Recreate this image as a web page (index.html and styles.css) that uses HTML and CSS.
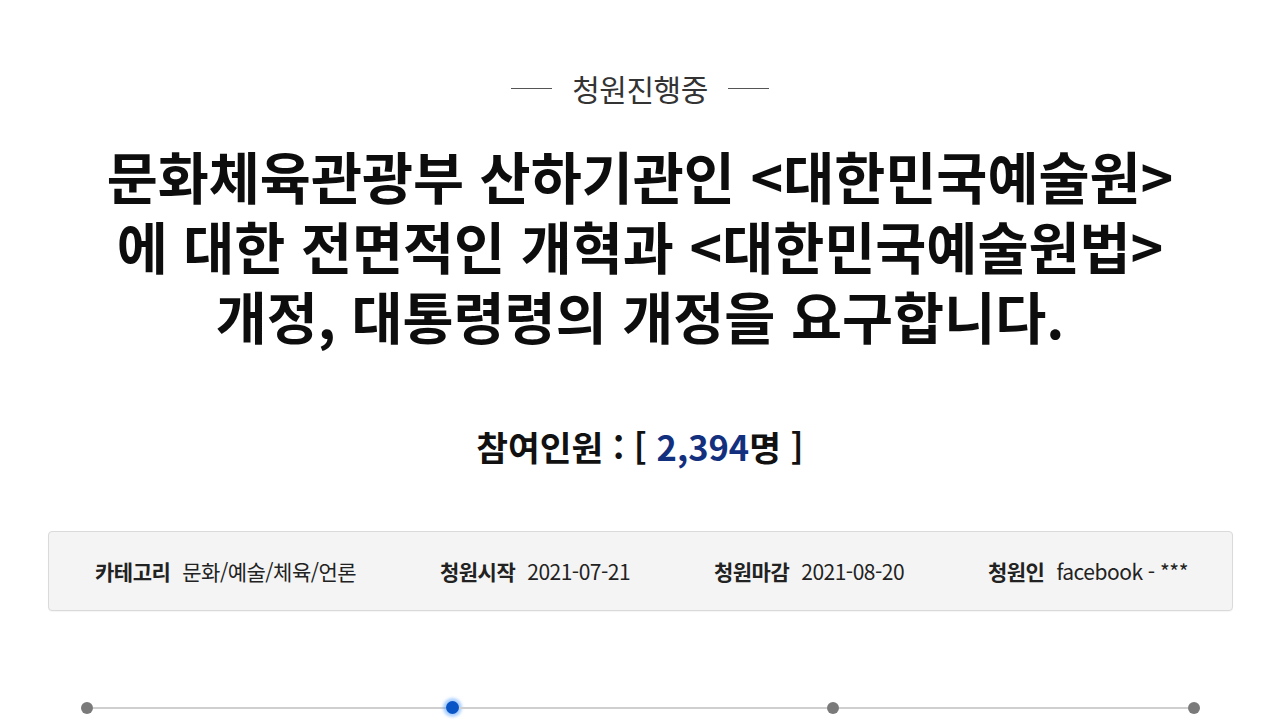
FILE: index.html
```html
<!DOCTYPE html>
<html lang="ko">
<head>
<meta charset="utf-8">
<title>청원진행중</title>
<link rel="stylesheet" href="styles.css">
</head>
<body>
<main class="petition">
  <div class="status">
    <span class="status-line"></span>
    <span class="status-text">청원진행중</span>
    <span class="status-line"></span>
  </div>
  <h1 class="title">
    <span class="title-line">문화체육관광부 산하기관인 &lt;대한민국예술원&gt;</span>
    <span class="title-line">에 대한 전면적인 개혁과 &lt;대한민국예술원법&gt;</span>
    <span class="title-line">개정, 대통령령의 개정을 요구합니다.</span>
  </h1>
  <p class="count">참여인원 : [ <span class="count-num">2,394</span>명 ]</p>
  <ul class="info">
    <li class="info-item"><span class="info-label">카테고리</span><span class="info-value">문화/예술/체육/언론</span></li>
    <li class="info-item"><span class="info-label">청원시작</span><span class="info-value">2021-07-21</span></li>
    <li class="info-item"><span class="info-label">청원마감</span><span class="info-value">2021-08-20</span></li>
    <li class="info-item"><span class="info-label">청원인</span><span class="info-value">facebook - ***</span></li>
  </ul>
  <div class="timeline">
    <span class="dot"></span>
    <span class="seg seg-1"></span>
    <span class="dot dot-active"></span>
    <span class="seg seg-2"></span>
    <span class="dot"></span>
    <span class="seg seg-3"></span>
    <span class="dot"></span>
  </div>
</main>
</body>
</html>
```

FILE: styles.css
```css
html, body {
  margin: 0;
  padding: 0;
  background: #ffffff;
}

body {
  font-family: "Noto Sans CJK KR", "Noto Sans", sans-serif;
  color: #111111;
  width: 1280px;
  height: 720px;
  overflow: hidden;
}

.petition {
  display: flex;
  flex-direction: column;
  align-items: center;
  padding-top: 72px;
}

.status {
  display: flex;
  align-items: center;
  gap: 20px;
  height: 32px;
}

.status-line {
  display: block;
  width: 41px;
  height: 1px;
  background: #555555;
}

.status-text {
  font-size: 30px;
  line-height: 32px;
  color: #333333;
  font-weight: 400;
  letter-spacing: -0.5px;
}

.title {
  margin: 36px 0 0;
  display: flex;
  flex-direction: column;
  align-items: center;
  font-size: 55.5px;
  font-weight: 700;
  color: #0d0d0d;
}

.title-line {
  display: block;
  height: 70px;
  line-height: 70px;
  white-space: nowrap;
}

.count {
  margin: 75px 0 0;
  font-size: 34.5px;
  line-height: 42px;
  font-weight: 700;
  color: #111111;
}

.count-num {
  color: #13307f;
}

.info {
  list-style: none;
  margin: 64px 0 0;
  padding: 0 44px 0 46px;
  box-sizing: border-box;
  width: 1185px;
  height: 80px;
  margin-left: 1px;
  display: flex;
  align-items: center;
  justify-content: space-between;
  background: #f4f4f4;
  border: 1px solid #dadada;
  border-radius: 4px;
  box-shadow: 0 1px 1px rgba(0, 0, 0, 0.04);
}

.info-item {
  display: flex;
  align-items: baseline;
  gap: 12px;
  font-size: 21px;
  color: #222222;
  letter-spacing: -0.5px;
}

.info-label {
  font-weight: 700;
}

.info-value {
  font-weight: 400;
}

.timeline {
  display: flex;
  align-items: center;
  width: 1119px;
  margin-top: 90px;
}

.dot {
  flex: 0 0 12px;
  height: 12px;
  border-radius: 50%;
  background: #7a7a7a;
}

.dot-active {
  flex-basis: 13px;
  height: 13px;
  background: #0a55c6;
  box-shadow: 0 0 3px 3px rgba(70, 150, 255, 0.45);
}

.seg {
  height: 2px;
  background: #cfcfcf;
  flex-basis: 0;
}

.seg-1 { flex-grow: 354; }
.seg-2 { flex-grow: 368; }
.seg-3 { flex-grow: 349; }
```
